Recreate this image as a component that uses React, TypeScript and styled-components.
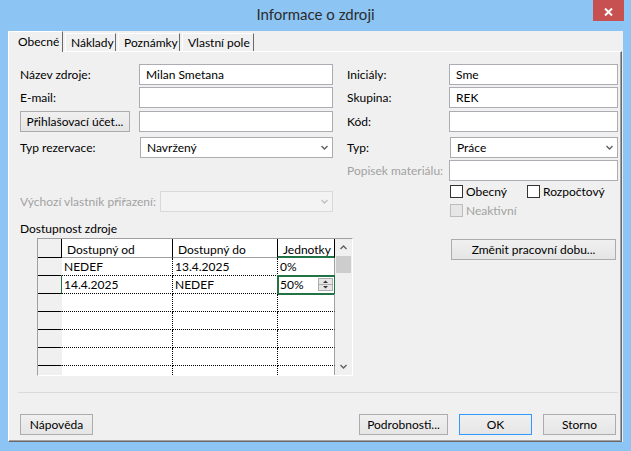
import styled, { createGlobalStyle } from "styled-components";

const GREEN = "#217346";

const GlobalStyle = createGlobalStyle`
  html, body {
    margin: 0;
    padding: 0;
    background: #8cc4f4;
  }
  body {
    font-family: Lato, "Open Sans", sans-serif;
    font-size: 12px;
    color: #000;
  }
  * {
    box-sizing: border-box;
  }
`

const Window = styled.div`
  width: 631px;
  height: 451px;
  display: flex;
  flex-direction: column;
  background: #8cc4f4;
`

const TitleBar = styled.div`
  height: 31px;
  display: grid;
  grid-template-columns: 1fr auto 1fr;
`

const Title = styled.div`
  grid-column: 2;
  font-size: 15px;
  line-height: 29px;
  color: #2b2b2b;
`

const CloseButton = styled.div`
  grid-column: 3;
  justify-self: end;
  width: 31px;
  height: 21px;
  margin-right: 7px;
  padding-top: 2px;
  background: #c75050;
  display: flex;
  align-items: center;
  justify-content: center;
`

const Client = styled.div`
  flex: 1;
  margin: 0 8px 9px;
  background: #f0f0f0;
  display: flex;
  flex-direction: column;
`

const TabStrip = styled.div`
  height: 20px;
  display: flex;
  align-items: flex-end;
`

const Tab = styled.div<{ $active?: boolean; $w: number }>`
  position: relative;
  z-index: ${p => (p.$active ? 1 : 0)};
  width: ${p => p.$w}px;
  height: ${p => (p.$active ? 21 : 18)}px;
  margin-bottom: ${p => (p.$active ? -1 : 0)}px;
  margin-left: ${p => (p.$active ? 0 : 2)}px;
  padding-left: ${p => (p.$active ? 9 : 5)}px;
  line-height: ${p => (p.$active ? 19 : 17)}px;
  background: #f0f0f0;
  border-top: 1px solid #fff;
  border-left: 1px solid #fff;
  border-right: 1px solid #696969;
  white-space: nowrap;
`

const Panel = styled.div`
  flex: 1;
  margin-right: 1px;
  border: 1px solid;
  border-color: #fff #696969 #696969 #fff;
  box-shadow: inset -1px -1px 0 #a0a0a0;
  padding: 12px 0 0 11px;
  display: flex;
  flex-direction: column;
`

const Content = styled.div`
  width: 598px;
  display: flex;
  flex-direction: column;
`

const Upper = styled.div`
  display: flex;
  gap: 14px;
  align-items: flex-start;
`

const Column = styled.div<{ $w: number }>`
  width: ${p => p.$w}px;
  display: flex;
  flex-direction: column;
`

const FieldRow = styled.div<{ $label: number; $mt?: number; $h?: number }>`
  display: grid;
  grid-template-columns: ${p => p.$label}px 1fr;
  align-items: center;
  height: ${p => p.$h ?? 21}px;
  margin-top: ${p => p.$mt ?? 0}px;
`

const Label = styled.span<{ $disabled?: boolean }>`
  white-space: nowrap;
  color: ${p => (p.$disabled ? "#a2a2a2" : "#000")};
`

const TextBox = styled.input`
  width: 100%;
  height: 100%;
  margin: 0;
  padding: 0 0 0 6px;
  border: 1px solid #abadb3;
  background: #fff;
  font: inherit;
  color: #000;
  outline: none;
`

const Select = styled.div<{ $disabled?: boolean }>`
  height: 100%;
  display: flex;
  align-items: center;
  justify-content: space-between;
  padding: 0 4px 0 6px;
  border: 1px solid ${p => (p.$disabled ? "#d9d9d9" : "#acacac")};
  background: ${p => (p.$disabled ? "#f3f3f3" : "#fff")};
`

const CheckRow = styled.div<{ $mt: number }>`
  display: flex;
  height: 13px;
  margin-top: ${p => p.$mt}px;
  padding-left: 103px;
`

const CheckItem = styled.label<{ $w?: number }>`
  display: flex;
  align-items: center;
  gap: 3px;
  width: ${p => (p.$w ? `${p.$w}px` : "auto")};
  line-height: 13px;
`

const Box = styled.span<{ $disabled?: boolean }>`
  width: 13px;
  height: 13px;
  border: 1px solid ${p => (p.$disabled ? "#bcbcbc" : "#333")};
  background: ${p => (p.$disabled ? "#e6e6e6" : "#fff")};
`

const Lower = styled.div`
  display: flex;
  margin-top: 4px;
`

const GroupLabel = styled.div`
  line-height: 16px;
`

const GridFrame = styled.div`
  margin: 1px 0 0 17px;
  width: 316px;
  height: 138px;
  display: flex;
  border: 1px solid;
  border-color: #a0a0a0 #fff #fff #a0a0a0;
`

const GridBody = styled.div`
  display: grid;
  grid-template-columns: 24px 111px 105px 57px;
  grid-template-rows: 19px repeat(6, 18px) 9px;
  background: #fff;
`

const Corner = styled.div`
  background: #f0f0f0;
  border-right: 1px solid #000;
  border-bottom: 1px solid #000;
`

const HeadCell = styled.div<{ $selected?: boolean }>`
  padding: 3px 0 0 5px;
  line-height: 16px;
  white-space: nowrap;
  background: #fff;
  border-right: 1px solid #000;
  border-bottom: 1px solid ${p => (p.$selected ? GREEN : "#a0a0a0")};
  box-shadow: ${p => (p.$selected ? `inset 0 -1px 0 ${GREEN}` : "none")};
`

const RowHead = styled.div<{ $active?: boolean; $last?: boolean }>`
  background: #f0f0f0;
  border-bottom: ${p => (p.$last ? "none" : "1px solid #000")};
  border-right: 1px solid ${p => (p.$active ? GREEN : "#f0f0f0")};
`

const DataCell = styled.div<{ $edge?: boolean; $last?: boolean; $selected?: boolean }>`
  display: flex;
  align-items: center;
  justify-content: space-between;
  padding: 0 1px 0 2px;
  line-height: 17px;
  white-space: nowrap;
  border-bottom: ${p => (p.$last ? "none" : "1px dotted #000")};
  border-right: 1px ${p => (p.$edge ? "solid #a0a0a0" : "dotted #000")};
  outline: ${p => (p.$selected ? `2px solid ${GREEN}` : "none")};
  outline-offset: -1px;
`

const ScrollBar = styled.div`
  width: 17px;
  display: flex;
  flex-direction: column;
  background: #f0f0f0;
`

const ScrollArrow = styled.div`
  height: 17px;
  display: flex;
  align-items: center;
  justify-content: center;
`

const ScrollThumb = styled.div`
  height: 17px;
  margin: 0 1px;
  background: #cdcdcd;
`

const ScrollTrack = styled.div`
  flex: 1;
`

const SideActions = styled.div`
  margin-left: 98px;
  padding-top: 18px;
`

const Button = styled.button<{ $w: number; $default?: boolean }>`
  width: ${p => p.$w}px;
  height: 21px;
  margin: 0;
  padding: 0;
  border: 1px solid ${p => (p.$default ? "#3399ff" : "#acacac")};
  background: linear-gradient(#f0f0f0, #e5e5e5);
  font: inherit;
  color: #000;
`

const Separator = styled.div`
  height: 1px;
  width: 600px;
  margin: 16px 0 0 -2px;
  background: #dadada;
`

const ButtonRow = styled.div`
  width: 596px;
  display: flex;
  margin-top: 21px;
`

const ButtonGroup = styled.div`
  margin-left: auto;
  display: flex;
  gap: 11px;
`

const Chevron = ({ up, color = "#606060" }: { up?: boolean; color?: string }) => (
  <svg width="7" height="5" viewBox="0 0 7 5">
    <polyline
      points={up ? "0.5,4 3.5,1 6.5,4" : "0.5,1 3.5,4 6.5,1"}
      fill="none"
      stroke={color}
      strokeWidth="1.4"
    />
  </svg>
)

const Spinner = () => (
  <svg width="15" height="13" viewBox="0 0 15 13">
    <rect x="0.5" y="0.5" width="14" height="12" fill="#e6e6e6" stroke="#acacac" />
    <line x1="1" y1="6.5" x2="14" y2="6.5" stroke="#acacac" />
    <polygon points="5,5 7.5,2.5 10,5" fill="#333" />
    <polygon points="5,8 7.5,10.5 10,8" fill="#333" />
  </svg>
)

type Row = { from?: string; to?: string; units?: string; active?: boolean }

const rows: Row[] = [
  { from: "NEDEF", to: "13.4.2025", units: "0%" },
  { from: "14.4.2025", to: "NEDEF", units: "50%", active: true },
  {},
  {},
  {},
  {},
  {},
]

const AvailabilityGrid = () => (
  <GridFrame>
    <GridBody>
      <Corner />
      <HeadCell>Dostupný od</HeadCell>
      <HeadCell>Dostupný do</HeadCell>
      <HeadCell $selected>Jednotky</HeadCell>
      {rows.map((r, i) => {
        const last = i === rows.length - 1
        return [
          <RowHead key={`h${i}`} $active={r.active} $last={last} />,
          <DataCell key={`a${i}`} $last={last}>{r.from}</DataCell>,
          <DataCell key={`b${i}`} $last={last}>{r.to}</DataCell>,
          <DataCell key={`c${i}`} $last={last} $edge $selected={r.active}>
            {r.units}
            {r.active && <Spinner />}
          </DataCell>,
        ]
      })}
    </GridBody>
    <ScrollBar>
      <ScrollArrow><Chevron up /></ScrollArrow>
      <ScrollThumb />
      <ScrollTrack />
      <ScrollArrow><Chevron /></ScrollArrow>
    </ScrollBar>
  </GridFrame>
)

const App = () => {
  return (
    <>
      <GlobalStyle />
      <Window>
        <TitleBar>
          <Title>Informace o zdroji</Title>
          <CloseButton>
            <svg width="9" height="8" viewBox="0 0 9 8">
              <path d="M1 0.5 L8 7.5 M8 0.5 L1 7.5" stroke="#fff" strokeWidth="2" />
            </svg>
          </CloseButton>
        </TitleBar>
        <Client>
          <TabStrip>
            <Tab $active $w={55}>Obecné</Tab>
            <Tab $w={51}>Náklady</Tab>
            <Tab $w={62}>Poznámky</Tab>
            <Tab $w={72}>Vlastní pole</Tab>
          </TabStrip>
          <Panel>
            <Content>
              <Upper>
                <Column $w={313}>
                  <FieldRow $label={119}>
                    <Label>Název zdroje:</Label>
                    <TextBox readOnly value="Milan Smetana" />
                  </FieldRow>
                  <FieldRow $label={119} $mt={2}>
                    <Label>E-mail:</Label>
                    <TextBox readOnly value="" />
                  </FieldRow>
                  <FieldRow $label={119} $mt={3}>
                    <Button $w={110}>Přihlašovací účet...</Button>
                    <TextBox readOnly value="" />
                  </FieldRow>
                  <FieldRow $label={120} $mt={5}>
                    <Label>Typ rezervace:</Label>
                    <Select>
                      Navržený
                      <Chevron />
                    </Select>
                  </FieldRow>
                  <FieldRow $label={140} $mt={33}>
                    <Label $disabled>Výchozí vlastník přiřazení:</Label>
                    <Select $disabled>
                      <span />
                      <Chevron color="#c0c0c0" />
                    </Select>
                  </FieldRow>
                </Column>
                <Column $w={271}>
                  <FieldRow $label={102}>
                    <Label>Iniciály:</Label>
                    <TextBox readOnly value="Sme" />
                  </FieldRow>
                  <FieldRow $label={102} $mt={2}>
                    <Label>Skupina:</Label>
                    <TextBox readOnly value="REK" />
                  </FieldRow>
                  <FieldRow $label={102} $mt={3}>
                    <Label>Kód:</Label>
                    <TextBox readOnly value="" />
                  </FieldRow>
                  <FieldRow $label={103} $mt={5}>
                    <Label>Typ:</Label>
                    <Select>
                      Práce
                      <Chevron />
                    </Select>
                  </FieldRow>
                  <FieldRow $label={102} $mt={2}>
                    <Label $disabled>Popisek materiálu:</Label>
                    <TextBox readOnly value="" />
                  </FieldRow>
                  <CheckRow $mt={4}>
                    <CheckItem $w={77}><Box />Obecný</CheckItem>
                    <CheckItem><Box />Rozpočtový</CheckItem>
                  </CheckRow>
                  <CheckRow $mt={6}>
                    <CheckItem>
                      <Box $disabled />
                      <Label $disabled>Neaktivní</Label>
                    </CheckItem>
                  </CheckRow>
                </Column>
              </Upper>
              <Lower>
                <div>
                  <GroupLabel>Dostupnost zdroje</GroupLabel>
                  <AvailabilityGrid />
                </div>
                <SideActions>
                  <Button $w={165}>Změnit pracovní dobu...</Button>
                </SideActions>
              </Lower>
              <Separator />
              <ButtonRow>
                <Button $w={73}>Nápověda</Button>
                <ButtonGroup>
                  <Button $w={89}>Podrobnosti...</Button>
                  <Button $w={73} $default>OK</Button>
                  <Button $w={73}>Storno</Button>
                </ButtonGroup>
              </ButtonRow>
            </Content>
          </Panel>
        </Client>
      </Window>
    </>
  )
}

export default App;
